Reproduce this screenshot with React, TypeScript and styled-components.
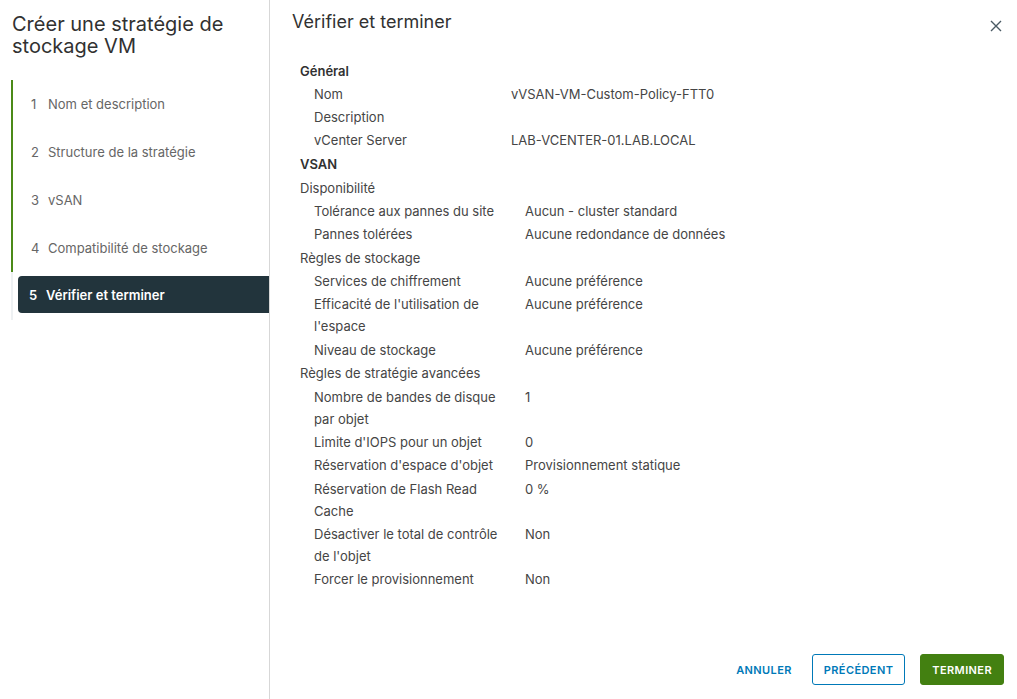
import styled, { createGlobalStyle } from "styled-components";

const GlobalStyle = createGlobalStyle`
    html, body {
        margin: 0;
        padding: 0;
        background: #ffffff;
    }
    body {
        font-family: "Inter", "Noto Sans", sans-serif;
        color: #333333;
    }
`;

const Page = styled.div`
    width: 1017px;
    height: 699px;
    display: flex;
    overflow: hidden;
`;

//  Left side: wizard steps
const Sidebar = styled.div`
    width: 269px;
    border-right: 1px solid #d7d7d7;
    flex-shrink: 0;
    display: flex;
    flex-direction: column;
`;

const WizardTitle = styled.h2`
    margin: 0;
    padding: 13px 12px 0 12px;
    font-size: 20px;
    font-weight: 400;
    line-height: 22px;
    color: #313131;
`;

const Steps = styled.ul`
    list-style: none;
    margin: 23px 0 0 11px;
    padding: 0 0 7px 0;
    border-left: 2px solid #eef1f3;
`;

const Step = styled.li<{ $done?: boolean; $active?: boolean }>`
    height: ${(p) => (p.$active ? "37px" : "48px")};
    margin-left: -2px;
    border-left: 2px solid ${(p) => (p.$done ? "#4b8a18" : "transparent")};
    display: flex;
    align-items: center;
    font-size: 13px;
    color: ${(p) => (p.$active ? "#ffffff" : "#666666")};
    font-weight: ${(p) => (p.$active ? 600 : 400)};
    ${(p) =>
        p.$active &&
        `
        background: #22343c;
        border-radius: 4px 0 0 4px;
        margin-left: 5px;
        border-left: none;
        margin-top: 4px;
    `}
    padding-left: ${(p) => (p.$active ? "11px" : "18px")};
`;

const StepNum = styled.span`
    width: 17px;
    flex-shrink: 0;
`;

//  Right side: review
const Main = styled.div`
    flex: 1;
    display: flex;
    flex-direction: column;
    padding: 0 13px 14px 22px;
`;

const Header = styled.div`
    display: flex;
    justify-content: space-between;
    align-items: flex-start;
    padding-top: 11px;
`;

const Title = styled.h1`
    margin: 0;
    font-size: 18px;
    font-weight: 400;
    line-height: 22px;
    color: #313131;
`;

const CloseBtn = styled.button`
    border: none;
    background: none;
    padding: 0;
    margin-top: 7px;
    width: 16px;
    height: 16px;
    display: flex;
    align-items: center;
    justify-content: center;
`;

const Review = styled.div`
    flex: 1;
    padding: 24px 0 0 8px;
    font-size: 13px;
    color: #454545;
`;

const Section = styled.div<{ $bold?: boolean }>`
    line-height: 22px;
    padding-top: 1.6px;
    font-weight: ${(p) => (p.$bold ? 600 : 400)};
    color: ${(p) => (p.$bold ? "#313131" : "#454545")};
`;

const Row = styled.div<{ $labelWidth: number }>`
    display: grid;
    grid-template-columns: ${(p) => p.$labelWidth}px 1fr;
    padding-left: 14px;
    padding-top: 1.3px;
    line-height: 22px;
`;

const Label = styled.div`
    padding-right: 12px;
`;

const Value = styled.div``;

const Footer = styled.div`
    display: flex;
    justify-content: flex-end;
    align-items: center;
`;

const Button = styled.button<{ $kind: "flat" | "outline" | "primary" }>`
    height: 31px;
    padding: 0 ${(p) => (p.$kind === "flat" ? "0" : "11px")};
    margin-left: ${(p) => (p.$kind === "primary" ? "15px" : p.$kind === "outline" ? "19px" : "0")};
    border-radius: 3px;
    font-family: "Inter", "Noto Sans", sans-serif;
    font-size: 11px;
    font-weight: 600;
    letter-spacing: 0.4px;
    text-transform: uppercase;
    cursor: pointer;
    border: 1px solid
        ${(p) =>
            p.$kind === "outline" ? "#0079b8" : p.$kind === "primary" ? "#438011" : "transparent"};
    background: ${(p) => (p.$kind === "primary" ? "#438011" : "#ffffff")};
    color: ${(p) => (p.$kind === "primary" ? "#ffffff" : "#0079b8")};
`;

interface IRow {
    label: string;
    value?: string;
}

interface ISection {
    title: string;
    bold?: boolean;
    labelWidth: number;
    rows: IRow[];
}

const steps = [
    "Nom et description",
    "Structure de la stratégie",
    "vSAN",
    "Compatibilité de stockage",
    "Vérifier et terminer",
];

const sections: ISection[] = [
    {
        title: "Général",
        bold: true,
        labelWidth: 197,
        rows: [
            { label: "Nom", value: "vVSAN-VM-Custom-Policy-FTT0" },
            { label: "Description" },
            { label: "vCenter Server", value: "LAB-VCENTER-01.LAB.LOCAL" },
        ],
    },
    { title: "VSAN", bold: true, labelWidth: 211, rows: [] },
    {
        title: "Disponibilité",
        labelWidth: 211,
        rows: [
            { label: "Tolérance aux pannes du site", value: "Aucun - cluster standard" },
            { label: "Pannes tolérées", value: "Aucune redondance de données" },
        ],
    },
    {
        title: "Règles de stockage",
        labelWidth: 211,
        rows: [
            { label: "Services de chiffrement", value: "Aucune préférence" },
            { label: "Efficacité de l'utilisation de l'espace", value: "Aucune préférence" },
            { label: "Niveau de stockage", value: "Aucune préférence" },
        ],
    },
    {
        title: "Règles de stratégie avancées",
        labelWidth: 211,
        rows: [
            { label: "Nombre de bandes de disque par objet", value: "1" },
            { label: "Limite d'IOPS pour un objet", value: "0" },
            { label: "Réservation d'espace d'objet", value: "Provisionnement statique" },
            { label: "Réservation de Flash Read Cache", value: "0 %" },
            { label: "Désactiver le total de contrôle de l'objet", value: "Non" },
            { label: "Forcer le provisionnement", value: "Non" },
        ],
    },
];

function App() {
    return (
        <>
            <GlobalStyle />
            <Page>
                <Sidebar>
                    <WizardTitle>Créer une stratégie de stockage VM</WizardTitle>
                    <Steps>
                        {steps.map((s, i) => (
                            <Step key={s} $done={i < 4} $active={i === 4}>
                                <StepNum>{i + 1}</StepNum>
                                {s}
                            </Step>
                        ))}
                    </Steps>
                </Sidebar>
                <Main>
                    <Header>
                        <Title>Vérifier et terminer</Title>
                        <CloseBtn aria-label="Fermer">
                            <svg width="12" height="12" viewBox="0 0 12 12">
                                <path d="M1 1 L11 11 M11 1 L1 11" stroke="#4a5a64" strokeWidth="1.4" />
                            </svg>
                        </CloseBtn>
                    </Header>
                    <Review>
                        {sections.map((sec) => (
                            <div key={sec.title}>
                                <Section $bold={sec.bold}>{sec.title}</Section>
                                {sec.rows.map((r) => (
                                    <Row key={r.label} $labelWidth={sec.labelWidth}>
                                        <Label>{r.label}</Label>
                                        <Value>{r.value}</Value>
                                    </Row>
                                ))}
                            </div>
                        ))}
                    </Review>
                    <Footer>
                        <Button $kind="flat">Annuler</Button>
                        <Button $kind="outline">Précédent</Button>
                        <Button $kind="primary">Terminer</Button>
                    </Footer>
                </Main>
            </Page>
        </>
    );
}

export default App;
